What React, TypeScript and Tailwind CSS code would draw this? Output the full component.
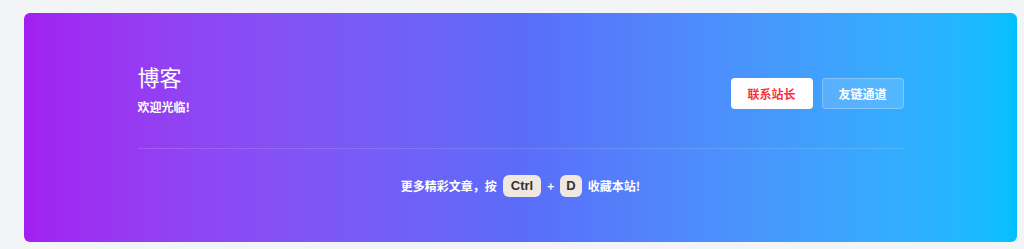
export default function App() {
  return (
    <div className="w-[1024px] h-[249px] bg-[#f3f4f6] pt-[13px] pl-[24px] pr-[7px]" style={{ fontFamily: '"Noto Sans CJK SC", "Liberation Sans", sans-serif' }}>
      <div className="h-[229px] rounded-[6px] bg-gradient-to-r from-[#a21ff0] via-[#5a6cf9] to-[#00c0ff] text-white">
        <div className="mx-auto w-[766px] pt-[49px]">
          {/* top row */}
          <div className="flex items-start justify-between">
            <div>
              <h1 className="text-[22px] leading-[28px] font-normal">博客</h1>
              <p className="mt-[9px] text-[12px] leading-[16px] font-bold">欢迎光临!</p>
            </div>
            <div className="flex gap-[9px] pt-[16px]">
              <button className="w-[82px] h-[31px] rounded-[4px] bg-white text-[#f5323c] text-[12px] font-bold">联系站长</button>
              <button className="w-[82px] h-[31px] rounded-[4px] bg-white/15 border border-white/25 text-white text-[12px] font-bold">友链通道</button>
            </div>
          </div>

          <div className="mt-[33px] h-px bg-white/15" />

          {/* bookmark tip */}
          <div className="mt-[26px] flex items-center justify-center gap-[6px] text-[12px] font-bold">
            <span>更多精彩文章，按</span>
            <kbd className="px-[8px] h-[22px] leading-[22px] rounded-[6px] bg-[#f0e7e1] text-[#333] text-[13px] font-bold" style={{ fontFamily: '"Liberation Sans", sans-serif' }}>Ctrl</kbd>
            <span>+</span>
            <kbd className="px-[6px] h-[22px] leading-[22px] rounded-[6px] bg-[#f0e7e1] text-[#333] text-[13px] font-bold" style={{ fontFamily: '"Liberation Sans", sans-serif' }}>D</kbd>
            <span>收藏本站!</span>
          </div>
        </div>
      </div>
    </div>
  );
}
